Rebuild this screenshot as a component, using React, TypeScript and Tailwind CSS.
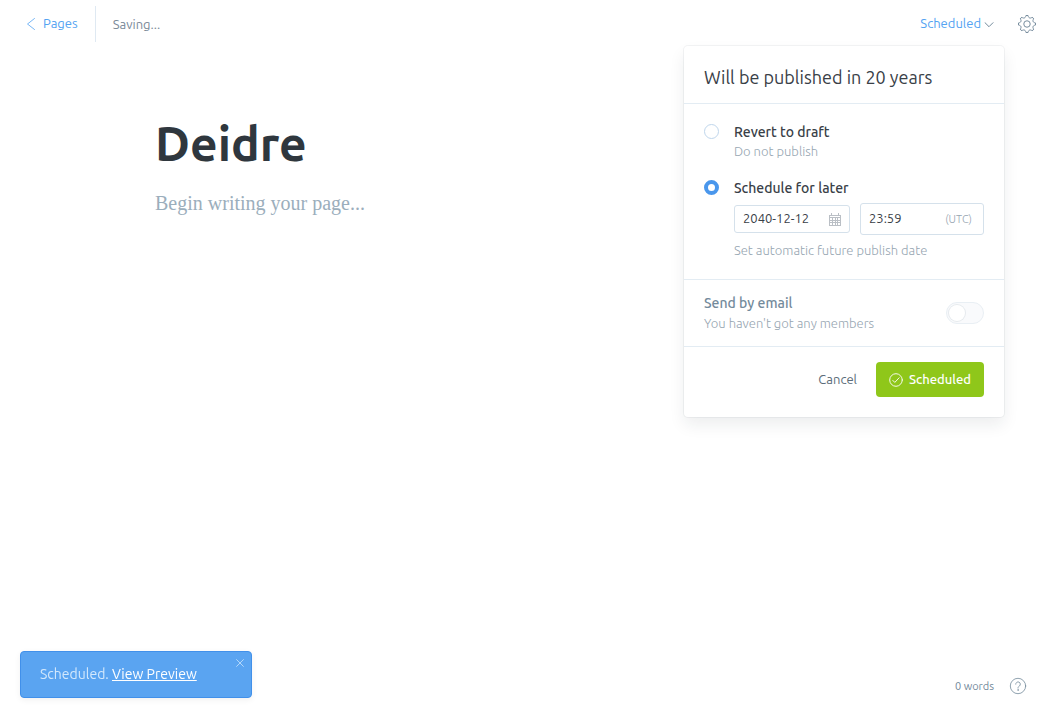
import { useState } from 'react';

const gearTeeth = 8;

function gearPath() {
  const point = (radius: number, degrees: number) => {
    const a = (degrees * Math.PI) / 180;
    return `${(12 + radius * Math.sin(a)).toFixed(2)} ${(12 - radius * Math.cos(a)).toFixed(2)}`;
  };
  let d = '';
  for (let i = 0; i < gearTeeth; i++) {
    const a = (i * 360) / gearTeeth;
    d += `${i === 0 ? 'M' : 'L'}${point(11.2, a - 8)}Q${point(11.9, a)} ${point(11.2, a + 8)}`;
    d += `C${point(8.2, a + 13)} ${point(8.2, a + 32)} ${point(11.2, a + 37)}`;
  }
  return d + 'Z';
}

function GearIcon() {
  return (
    <svg viewBox="0 0 24 24" className="h-[18px] w-[18px]" fill="none" stroke="currentColor" strokeWidth="1.3" strokeLinejoin="round" aria-hidden="true">
      <circle cx="12" cy="12" r="4.3" />
      <path d={gearPath()} />
    </svg>
  );
}

function CalendarIcon() {
  return (
    <svg viewBox="0 0 12 13" className="h-[13px] w-3 shrink-0 text-[#a3aab2]" fill="none" stroke="currentColor" shapeRendering="crispEdges" aria-hidden="true">
      <path d="M.5 2v11M11.500 2v11M0 2.500h12M0 4.500h12M0 7.500h12M0 9.500h12M0 12.500h12M3.500 4v9M6.500 4v9M8.500 4v9M2.500 0v3M9.500 0v3" strokeWidth="1" opacity=".75" />
    </svg>
  );
}

const radioClass =
  'mt-[5px] h-[15px] w-[15px] shrink-0 appearance-none rounded-full border border-[#bfd6ec] bg-white checked:border-4 checked:border-[#4a97ec]';
const hintClass = 'text-[13px] leading-5 font-light text-[#96a5b1]';
const optionClass = 'block text-[14px] leading-[26px] font-medium';

function PublishMenu() {
  const [mode, setMode] = useState('schedule');
  const [date, setDate] = useState('2040-12-12');
  const [time, setTime] = useState('23:59');
  return (
    <section
      aria-label="Publish options"
      className="absolute top-[46px] right-0 z-10 w-80 rounded bg-white text-[#394047] shadow-[0_0_0_1px_rgba(99,114,130,0.08),0_8px_16px_rgba(27,39,51,0.08)]"
    >
      <h2 className="border-b border-[#e3ecf3] px-5 pt-[18px] pb-[13px] text-[18px] leading-[26px]">Will be published in 20 years</h2>
      <div className="flex flex-col gap-[14px] border-b border-[#e3ecf3] px-5 pt-[15px] pb-[19px]">
        <div className="flex gap-[15px]">
          <input id="draft" type="radio" name="mode" className={radioClass} checked={mode === 'draft'} onChange={() => setMode('draft')} />
          <div>
            <label htmlFor="draft" className={optionClass}>Revert to draft</label>
            <p className={`-mt-1 ${hintClass}`}>Do not publish</p>
          </div>
        </div>
        <div className="flex gap-[15px]">
          <input id="schedule" type="radio" name="mode" className={radioClass} checked={mode === 'schedule'} onChange={() => setMode('schedule')} />
          <div className="min-w-0 flex-1">
            <label htmlFor="schedule" className={optionClass}>Schedule for later</label>
            <div className="mt-[2px] flex items-center gap-[10px]">
              <div className="flex h-7 w-[116px] items-center rounded-[3px] border border-[#d5e1eb] px-2">
                <input aria-label="Publish date" className="min-w-0 flex-1 bg-transparent text-[13px] outline-none" value={date} onChange={(e) => setDate(e.target.value)} />
                <CalendarIcon />
              </div>
              <div className="flex h-8 min-w-0 flex-1 items-center rounded-[3px] border border-[#d5e1eb] pr-[11px] pl-2">
                <input aria-label="Publish time" className="min-w-0 flex-1 bg-transparent text-[13px] outline-none" value={time} onChange={(e) => setTime(e.target.value)} />
                <span className="text-[11px] font-light text-[#96a5b1]">(UTC)</span>
              </div>
            </div>
            <p className={`mt-[5px] ${hintClass}`}>Set automatic future publish date</p>
          </div>
        </div>
      </div>
      <div className="flex items-center justify-between border-b border-[#e3ecf3] px-5 py-[13px]">
        <div>
          <label htmlFor="email" className="block text-[14px] leading-5 font-medium text-[#738a9b]">Send by email</label>
          <p className={hintClass}>You haven't got any members</p>
        </div>
        <input
          id="email"
          type="checkbox"
          role="switch"
          disabled
          className="h-[22px] w-[38px] appearance-none rounded-full border border-[#e9eff4] bg-[#f9fafc] p-[2px] before:block before:h-4 before:w-4 before:rounded-full before:bg-white before:shadow-[0_0_0_1px_#e6eaee]"
        />
      </div>
      <div className="flex items-center justify-end gap-[19px] px-5 pt-[15px] pb-5">
        <button type="button" className="text-[13px] text-[#5b6c79]">Cancel</button>
        <button type="button" className="flex h-[35px] w-[108px] items-center justify-center gap-[6px] rounded bg-[#8fc71a] text-[13px] font-medium text-white">
          <svg viewBox="0 0 14 14" className="h-[14px] w-[14px]" fill="none" stroke="currentColor" strokeWidth=".9" strokeLinecap="round" strokeLinejoin="round" aria-hidden="true">
            <circle cx="7" cy="7" r="6.300" />
            <path d="M3.800 7.400l2 2 4.300-4.600" />
          </svg>
          Scheduled
        </button>
      </div>
    </section>
  );
}

export default function App() {
  return (
    <div className="flex min-h-screen flex-col bg-white font-['Ubuntu','Open_Sans',sans-serif] text-[#394047]">
      <header className="flex h-12 items-center justify-between pr-[14px] pl-[26px] text-[13px]">
        <div className="flex items-center">
          <a href="#pages" className="flex items-center gap-[7px] text-[#54a3f2]">
            <svg viewBox="0 0 10 14" className="h-[14px] w-[10px]" fill="none" stroke="currentColor" strokeWidth=".8" strokeLinecap="round" strokeLinejoin="round" aria-hidden="true">
              <path d="M8.500 1.500L1.500 7l7 5.500" />
            </svg>
            Pages
          </a>
          <span className="ml-[17px] border-l border-[#dfe9f2] pl-[17px] leading-9 text-[#7c8b9a]">Saving...</span>
        </div>
        <div className="flex items-center">
          <div className="relative mr-[14px] flex h-12 items-center pr-[10px]">
            <button type="button" aria-expanded="true" className="flex items-center gap-[3px] text-[#54a3f2]">
              Scheduled
              <svg viewBox="0 0 10 6" className="mt-[2px] h-[6px] w-[10px] text-[#738a9b]" fill="none" stroke="currentColor" strokeLinecap="round" strokeLinejoin="round" aria-hidden="true">
                <path d="M1 .7l4 4 4-4" />
              </svg>
            </button>
            <PublishMenu />
          </div>
          <button type="button" aria-label="Settings" className="text-[#738a9b]">
            <GearIcon />
          </button>
        </div>
      </header>
      <main className="mx-auto w-full max-w-[740px] flex-1 pt-[66px]">
        <h1 className="text-[48px] leading-[58px] font-bold text-[#2f373e]">Deidre</h1>
        <p className="mt-[15px] font-['Liberation_Serif',serif] text-[20px] leading-8 text-[#9baebc]">Begin writing your page...</p>
      </main>
      <footer className="flex items-center justify-end gap-4 px-6 pb-6 text-[11px] text-[#738a9b]">
        <span>0 words</span>
        <button type="button" aria-label="Help">
          <svg viewBox="0 0 16 16" className="h-4 w-4 overflow-visible" fill="none" stroke="currentColor" strokeWidth=".8" strokeLinecap="round" aria-hidden="true">
            <circle cx="8" cy="8" r="7.700" />
            <path d="M5.700 6.200a2.300 2.300 0 1 1 3.700 1.800c-.9.600-1.400 1-1.400 2.100" />
            <circle cx="8" cy="12" r=".3" />
          </svg>
        </button>
      </footer>
      <aside
        role="status"
        className="fixed bottom-5 left-5 w-[232px] rounded border border-[#4190ea] bg-[#5aa4f1] px-[19px] py-3 text-[14px] leading-[21px] text-[#d3e8fc] shadow-[0_2px_6px_rgba(0,0,0,0.06)]"
      >
        Scheduled. <a href="#preview" className="text-white underline">View Preview</a>
        <button type="button" aria-label="Close" className="absolute top-[7px] right-[7px] text-[#bddcfa]">
          <svg viewBox="0 0 8 8" className="h-2 w-2" fill="none" stroke="currentColor" strokeWidth=".9" aria-hidden="true">
            <path d="M.3.3l7.400 7.400M7.700.3L.3 7.700" />
          </svg>
        </button>
      </aside>
    </div>
  );
}
